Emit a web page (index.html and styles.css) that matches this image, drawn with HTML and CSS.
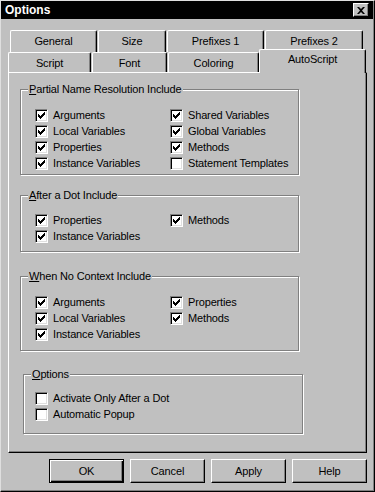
FILE: index.html
```html
<!DOCTYPE html>
<html lang="en">
<head>
    <meta charset="UTF-8">
    <meta name="viewport" content="width=device-width, initial-scale=1.0">
    <title>Options</title>
    <link rel="stylesheet" href="styles.css">
</head>

<body>

<div class="dialog">
    <!-- Title bar -->
    <div class="titlebar">
        <span class="title">Options</span>
        <span class="close">
            <svg width="8" height="7" viewBox="0 0 8 7"><path d="M0 0h2l2 2 2-2h2L5 3.5 8 7H6L4 5 2 7H0l3-3.5z"/></svg>
        </span>
    </div>

    <!-- Tabs -->
    <div class="tab-row back">
        <div class="tab t-general">General</div>
        <div class="tab t-size">Size</div>
        <div class="tab t-pre1">Prefixes 1</div>
        <div class="tab t-pre2">Prefixes 2</div>
    </div>
    <div class="tab-row front">
        <div class="tab t-script">Script</div>
        <div class="tab t-font">Font</div>
        <div class="tab t-coloring">Coloring</div>
        <div class="tab t-auto selected">AutoScript</div>
    </div>

    <div class="panel">
        <div class="group g-partial">
            <div class="group-title"><u>P</u>artial Name Resolution Include</div>
            <div class="checks">
                <label class="check"><span class="box"><svg width="7" height="7" viewBox="0 0 7 7"><path d="M0 2h1v3H0zM1 3h1v3H1zM2 4h1v3H2zM3 3h1v3H3zM4 2h1v3H4zM5 1h1v3H5zM6 0h1v3H6z"/></svg></span>Arguments</label>
                <label class="check"><span class="box"><svg width="7" height="7" viewBox="0 0 7 7"><path d="M0 2h1v3H0zM1 3h1v3H1zM2 4h1v3H2zM3 3h1v3H3zM4 2h1v3H4zM5 1h1v3H5zM6 0h1v3H6z"/></svg></span>Shared Variables</label>
                <label class="check"><span class="box"><svg width="7" height="7" viewBox="0 0 7 7"><path d="M0 2h1v3H0zM1 3h1v3H1zM2 4h1v3H2zM3 3h1v3H3zM4 2h1v3H4zM5 1h1v3H5zM6 0h1v3H6z"/></svg></span>Local Variables</label>
                <label class="check"><span class="box"><svg width="7" height="7" viewBox="0 0 7 7"><path d="M0 2h1v3H0zM1 3h1v3H1zM2 4h1v3H2zM3 3h1v3H3zM4 2h1v3H4zM5 1h1v3H5zM6 0h1v3H6z"/></svg></span>Global Variables</label>
                <label class="check"><span class="box"><svg width="7" height="7" viewBox="0 0 7 7"><path d="M0 2h1v3H0zM1 3h1v3H1zM2 4h1v3H2zM3 3h1v3H3zM4 2h1v3H4zM5 1h1v3H5zM6 0h1v3H6z"/></svg></span>Properties</label>
                <label class="check"><span class="box"><svg width="7" height="7" viewBox="0 0 7 7"><path d="M0 2h1v3H0zM1 3h1v3H1zM2 4h1v3H2zM3 3h1v3H3zM4 2h1v3H4zM5 1h1v3H5zM6 0h1v3H6z"/></svg></span>Methods</label>
                <label class="check"><span class="box"><svg width="7" height="7" viewBox="0 0 7 7"><path d="M0 2h1v3H0zM1 3h1v3H1zM2 4h1v3H2zM3 3h1v3H3zM4 2h1v3H4zM5 1h1v3H5zM6 0h1v3H6z"/></svg></span>Instance Variables</label>
                <label class="check"><span class="box"></span>Statement Templates</label>
            </div>
        </div>

        <div class="group g-dot">
            <div class="group-title"><u>A</u>fter a Dot Include</div>
            <div class="checks">
                <label class="check"><span class="box"><svg width="7" height="7" viewBox="0 0 7 7"><path d="M0 2h1v3H0zM1 3h1v3H1zM2 4h1v3H2zM3 3h1v3H3zM4 2h1v3H4zM5 1h1v3H5zM6 0h1v3H6z"/></svg></span>Properties</label>
                <label class="check"><span class="box"><svg width="7" height="7" viewBox="0 0 7 7"><path d="M0 2h1v3H0zM1 3h1v3H1zM2 4h1v3H2zM3 3h1v3H3zM4 2h1v3H4zM5 1h1v3H5zM6 0h1v3H6z"/></svg></span>Methods</label>
                <label class="check"><span class="box"><svg width="7" height="7" viewBox="0 0 7 7"><path d="M0 2h1v3H0zM1 3h1v3H1zM2 4h1v3H2zM3 3h1v3H3zM4 2h1v3H4zM5 1h1v3H5zM6 0h1v3H6z"/></svg></span>Instance Variables</label>
            </div>
        </div>

        <div class="group g-context">
            <div class="group-title"><u>W</u>hen No Context Include</div>
            <div class="checks">
                <label class="check"><span class="box"><svg width="7" height="7" viewBox="0 0 7 7"><path d="M0 2h1v3H0zM1 3h1v3H1zM2 4h1v3H2zM3 3h1v3H3zM4 2h1v3H4zM5 1h1v3H5zM6 0h1v3H6z"/></svg></span>Arguments</label>
                <label class="check"><span class="box"><svg width="7" height="7" viewBox="0 0 7 7"><path d="M0 2h1v3H0zM1 3h1v3H1zM2 4h1v3H2zM3 3h1v3H3zM4 2h1v3H4zM5 1h1v3H5zM6 0h1v3H6z"/></svg></span>Properties</label>
                <label class="check"><span class="box"><svg width="7" height="7" viewBox="0 0 7 7"><path d="M0 2h1v3H0zM1 3h1v3H1zM2 4h1v3H2zM3 3h1v3H3zM4 2h1v3H4zM5 1h1v3H5zM6 0h1v3H6z"/></svg></span>Local Variables</label>
                <label class="check"><span class="box"><svg width="7" height="7" viewBox="0 0 7 7"><path d="M0 2h1v3H0zM1 3h1v3H1zM2 4h1v3H2zM3 3h1v3H3zM4 2h1v3H4zM5 1h1v3H5zM6 0h1v3H6z"/></svg></span>Methods</label>
                <label class="check"><span class="box"><svg width="7" height="7" viewBox="0 0 7 7"><path d="M0 2h1v3H0zM1 3h1v3H1zM2 4h1v3H2zM3 3h1v3H3zM4 2h1v3H4zM5 1h1v3H5zM6 0h1v3H6z"/></svg></span>Instance Variables</label>
            </div>
        </div>

        <div class="group g-options">
            <div class="group-title"><u>O</u>ptions</div>
            <div class="checks single">
                <label class="check"><span class="box"></span>Activate Only After a Dot</label>
                <label class="check"><span class="box"></span>Automatic Popup</label>
            </div>
        </div>
    </div>

    <!-- Buttons -->
    <div class="buttons">
        <button class="btn default">OK</button>
        <button class="btn">Cancel</button>
        <button class="btn">Apply</button>
        <button class="btn">Help</button>
    </div>
</div>

</body>
</html>
```

FILE: styles.css
```css
body {
    margin: 0;
    padding: 0;
    font-family: "Liberation Sans", Arial, sans-serif;
    font-size: 11px;
    letter-spacing: -0.15px;
    color: #000;
    background: #c0c0c0;
}
.dialog {
    width: 375px;
    height: 492px;
    box-sizing: border-box;
    background: #c0c0c0;
    border: 1px solid;
    border-color: #dfdfdf #000 #000 #dfdfdf;
    padding: 0 1px 1px 0;
    box-shadow: inset -1px -1px 0 #808080;
}

/* title bar */
.titlebar {
    height: 18px;
    background: #000;
    color: #fff;
    display: flex;
    align-items: center;
    justify-content: space-between;
    padding: 0 4px 0 4px;
}
.title {
    font-weight: bold;
    font-size: 12px;
    letter-spacing: 0;
}
.close {
    width: 14px;
    height: 12px;
    background: #c0c0c0;
    border: 1px solid;
    border-color: #fff #000 #000 #fff;
    box-shadow: inset -1px -1px 0 #808080;
    display: flex;
    align-items: center;
    justify-content: center;
}

/* tabs */
.tab-row {
    display: flex;
}
.tab-row.back {
    margin: 11px 0 0 9px;
    height: 22px;
}
.tab-row.front {
    margin-left: 7px;
    height: 20px;
    align-items: flex-end;
}
.tab {
    box-sizing: border-box;
    height: 100%;
    margin-right: 1px;
    border-top: 1px solid #fff;
    border-left: 1px solid #fff;
    border-right: 1px solid #000;
    border-radius: 2px 2px 0 0;
    box-shadow: inset -1px 0 0 #808080;
    text-align: center;
    line-height: 21px;
    background: #c0c0c0;
}
.t-general { width: 87px; }
.t-size { width: 68px; }
.t-pre1 { width: 97px; }
.t-pre2 { width: 98px; }
.t-script { width: 83px; }
.t-font { width: 75px; }
.t-coloring { width: 91px; margin-right: 0; }
.t-auto { width: 107px; margin-right: 0; }
.tab.selected {
    height: 24px;
    margin-bottom: -1px;
    line-height: 19px;
    position: relative;
    z-index: 1;
}

/* panel */
.panel {
    box-sizing: border-box;
    width: 359px;
    height: 381px;
    margin-left: 7px;
    border: 1px solid;
    border-color: #fff #000 #000 #fff;
    box-shadow: inset -1px -1px 0 #808080;
    padding: 16px 0 0 11px;
}
.group {
    box-sizing: border-box;
    width: 279px;
    position: relative;
    border: 1px solid #808080;
    box-shadow: inset 1px 1px 0 #fff, 1px 1px 0 #fff;
}
.group-title {
    position: absolute;
    top: -7px;
    left: 7px;
    padding: 0 1px;
    line-height: 13px;
    background: #c0c0c0;
}
.g-partial { height: 86px; }
.g-dot { height: 57px; margin-top: 20px; }
.g-context { height: 75px; margin-top: 24px; }
.g-options { height: 60px; margin-top: 23px; margin-left: 3px; width: 280px; }

.checks {
    display: grid;
    grid-template-columns: 135px auto;
    grid-auto-rows: 16px;
    padding: 17px 0 0 14px;
}
.g-dot .checks { padding-top: 16px; }
.g-options .checks { padding: 15px 0 0 11px; }
.checks.single {
    grid-template-columns: auto;
}
.check {
    display: flex;
    align-items: center;
    gap: 5px;
    white-space: nowrap;
}
.box {
    box-sizing: border-box;
    width: 13px;
    height: 13px;
    flex: none;
    background: #fff;
    border: 1px solid;
    border-color: #808080 #fff #fff #808080;
    box-shadow: inset 1px 1px 0 #000, inset -1px -1px 0 #dfdfdf;
    display: flex;
    align-items: center;
    justify-content: center;
}
.box svg {
    display: block;
}

/* buttons */
.buttons {
    display: flex;
    justify-content: flex-end;
    gap: 6px;
    margin-top: 6px;
    padding-right: 6px;
}
.btn {
    box-sizing: border-box;
    width: 75px;
    height: 24px;
    padding: 0;
    font-family: inherit;
    font-size: 11px;
    letter-spacing: -0.15px;
    color: #000;
    background: #c0c0c0;
    border: 1px solid;
    border-color: #fff #000 #000 #fff;
    box-shadow: inset -1px -1px 0 #808080;
    border-radius: 0;
}
.btn.default {
    border-color: #000;
    box-shadow: inset 1px 1px 0 #fff, inset -1px -1px 0 #000, inset -2px -2px 0 #808080;
}
```
